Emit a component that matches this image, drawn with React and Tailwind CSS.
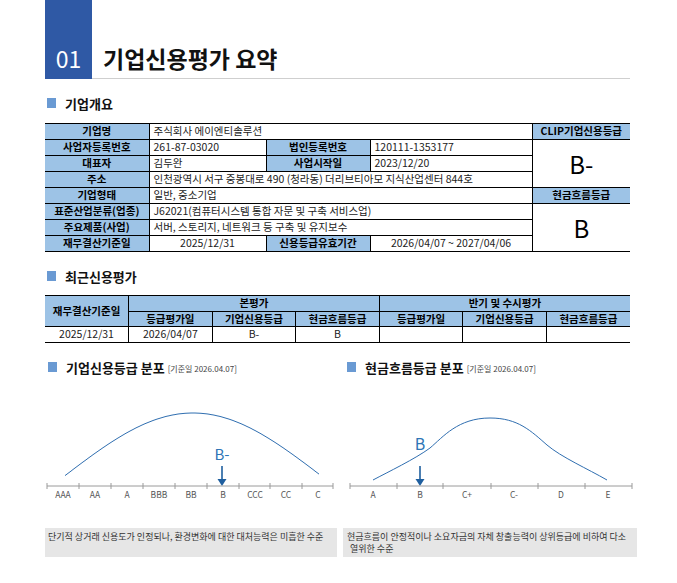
import React from "react";

const FONT = "font-['Noto_Sans_CJK_KR','Noto_Sans',sans-serif]";

const th = "bg-[#9dc3e6] border border-black font-bold text-black text-center px-1 whitespace-nowrap";
const td = "border border-black text-[#222] px-[4px] whitespace-nowrap";

// gaussian curve for the credit grade chart
const bell = () => {
  let d = "";
  for (let x = 20; x <= 274; x += 2) {
    const y = 197 - 163 * Math.exp(-((x - 148) ** 2) / (2 * 130 * 130));
    d += (x === 20 ? "M" : "L") + x + " " + y.toFixed(1) + " ";
  }
  return d;
};

const SectionTitle = ({ children, sub }) => (
  <div className="flex items-center h-[16px]">
    <span className="w-[9px] h-[10px] bg-[#6a9ad3]" />
    <span className="ml-[9px] text-[13px] font-bold text-[#111] leading-none">{children}</span>
    {sub && <span className="ml-[3px] mt-[3px] text-[8px] text-[#444] leading-none">{sub}</span>}
  </div>
);

const Axis = ({ ticks, labels, x1, x2 }) => (
  <g>
    <line x1={x1} y1="107" x2={x2} y2="107" stroke="#9a9a9a" strokeWidth="1" />
    {ticks.map((t) => (
      <line key={t} x1={t} y1="104" x2={t} y2="110" stroke="#9a9a9a" strokeWidth="1" />
    ))}
    {labels.map(([l, x]) => (
      <text key={l} x={x} y="119" textAnchor="middle" fontSize="8.5" fill="#555">
        {l}
      </text>
    ))}
  </g>
);

const Arrow = ({ x }) => (
  <g>
    <line x1={x} y1="87" x2={x} y2="102" stroke="#1f5f9f" strokeWidth="1.6" />
    <polygon points={`${x - 4.5},100 ${x + 4.5},100 ${x},107`} fill="#1f5f9f" />
  </g>
);

export default function App() {
  const leftTicks = [2, 34, 66, 98, 130, 162, 194, 225, 257, 288];
  const leftLabels = [
    ["AAA", 18], ["AA", 50], ["A", 82], ["BBB", 114], ["BB", 146],
    ["B", 178], ["CCC", 210], ["CC", 241], ["C", 273],
  ];
  const rightTicks = [7, 54, 100, 148, 195, 242, 289];
  const rightLabels = [
    ["A", 30], ["B", 77], ["C+", 124], ["C-", 171], ["D", 218], ["E", 265],
  ];

  return (
    <div className={`w-[677px] h-[583px] bg-white overflow-hidden ${FONT}`}>
      {/* header */}
      <div className="flex ml-[45px] w-[585px] h-[79px]">
        <div className="w-[47px] h-full bg-[#2f59a5] flex items-end justify-center pb-[9px] text-white text-[23px] leading-none">
          01
        </div>
        <div className="flex-1 h-full border-b border-[#cfcfcf] flex items-end pl-[11px] pb-[8px]">
          <span className="text-[23px] font-bold text-[#111] leading-none">기업신용평가 요약</span>
        </div>
      </div>

      {/* 기업개요 */}
      <div className="ml-[47px] mt-[16px]">
        <SectionTitle>기업개요</SectionTitle>
      </div>
      <table className="ml-[45px] mt-[12px] w-[585px] table-fixed border-collapse text-[10.5px] leading-none">
        <colgroup>
          <col className="w-[104px]" />
          <col className="w-[117px]" />
          <col className="w-[104px]" />
          <col className="w-[162px]" />
          <col className="w-[98px]" />
        </colgroup>
        <tbody>
          <tr className="h-[16px]">
            <th className={`${th} border-l-0`}>기업명</th>
            <td className={td} colSpan={3}>주식회사 에이엔티솔루션</td>
            <th className={`${th} border-r-0`}>CLIP기업신용등급</th>
          </tr>
          <tr className="h-[16px]">
            <th className={`${th} border-l-0`}>사업자등록번호</th>
            <td className={td}>261-87-03020</td>
            <th className={th}>법인등록번호</th>
            <td className={td}>120111-1353177</td>
            <td rowSpan={3} className="border border-black border-r-0 text-center text-[24px] text-black">B-</td>
          </tr>
          <tr className="h-[16px]">
            <th className={`${th} border-l-0`}>대표자</th>
            <td className={td}>김두완</td>
            <th className={th}>사업시작일</th>
            <td className={td}>2023/12/20</td>
          </tr>
          <tr className="h-[16px]">
            <th className={`${th} border-l-0`}>주소</th>
            <td className={td} colSpan={3}>인천광역시 서구 중봉대로 490 (청라동) 더리브티아모 지식산업센터 844호</td>
          </tr>
          <tr className="h-[16px]">
            <th className={`${th} border-l-0`}>기업형태</th>
            <td className={td} colSpan={3}>일반, 중소기업</td>
            <th className={`${th} border-r-0`}>현금흐름등급</th>
          </tr>
          <tr className="h-[16px]">
            <th className={`${th} border-l-0`}>표준산업분류(업종)</th>
            <td className={td} colSpan={3}>J62021(컴퓨터시스템 통합 자문 및 구축 서비스업)</td>
            <td rowSpan={3} className="border border-black border-r-0 text-center text-[24px] text-black">B</td>
          </tr>
          <tr className="h-[16px]">
            <th className={`${th} border-l-0`}>주요제품(사업)</th>
            <td className={td} colSpan={3}>서버, 스토리지, 네트워크 등 구축 및 유지보수</td>
          </tr>
          <tr className="h-[16px]">
            <th className={`${th} border-l-0`}>재무결산기준일</th>
            <td className={`${td} text-center`}>2025/12/31</td>
            <th className={th}>신용등급유효기간</th>
            <td className={`${td} text-center`}>2026/04/07 ~ 2027/04/06</td>
          </tr>
        </tbody>
      </table>

      {/* 최근신용평가 */}
      <div className="ml-[47px] mt-[16px]">
        <SectionTitle>최근신용평가</SectionTitle>
      </div>
      <table className="ml-[45px] mt-[11px] w-[585px] table-fixed border-collapse text-[10.5px] leading-none text-center">
        <tbody>
          <tr className="h-[16px]">
            <th rowSpan={2} className={`${th} border-l-0`}>재무결산기준일</th>
            <th colSpan={3} className={th}>본평가</th>
            <th colSpan={3} className={`${th} border-r-0`}>반기 및 수시평가</th>
          </tr>
          <tr className="h-[15px]">
            <th className={th}>등급평가일</th>
            <th className={th}>기업신용등급</th>
            <th className={th}>현금흐름등급</th>
            <th className={th}>등급평가일</th>
            <th className={th}>기업신용등급</th>
            <th className={`${th} border-r-0`}>현금흐름등급</th>
          </tr>
          <tr className="h-[16px]">
            <td className={`${td} border-l-0 text-center`}>2025/12/31</td>
            <td className={`${td} text-center`}>2026/04/07</td>
            <td className={`${td} text-center`}>B-</td>
            <td className={`${td} text-center`}>B</td>
            <td className={td}></td>
            <td className={td}></td>
            <td className={`${td} border-r-0`}></td>
          </tr>
        </tbody>
      </table>

      {/* 분포 charts */}
      <div className="flex ml-[45px] mt-[16px]">
        <div className="w-[292px]">
          <div className="pl-[3px]">
            <SectionTitle sub="[기준일 2026.04.07]">기업신용등급 분포</SectionTitle>
          </div>
          <svg width="292" height="125" className="mt-[4px]">
            <path d={bell()} fill="none" stroke="#2f6eb0" strokeWidth="1" />
            <text x="177" y="81" textAnchor="middle" fontSize="15" fill="#2e75b6">B-</text>
            <Arrow x={177} />
            <Axis ticks={leftTicks} labels={leftLabels} x1={2} x2={288} />
          </svg>
        </div>
        <div className="w-[294px] ml-[6px]">
          <div className="pl-[4px]">
            <SectionTitle sub="[기준일 2026.04.07]">현금흐름등급 분포</SectionTitle>
          </div>
          <svg width="294" height="125" className="mt-[4px]">
            <path
              d="M30 101 C45 93 72 80 87 69 C100 58 115 39 147 39 C175 39 188 52 204 66 C218 78 245 90 264 101"
              fill="none"
              stroke="#2f6eb0"
              strokeWidth="1"
            />
            <text x="77" y="71" textAnchor="middle" fontSize="16" fill="#2e75b6">B</text>
            <Arrow x={77} />
            <Axis ticks={rightTicks} labels={rightLabels} x1={7} x2={289} />
          </svg>
        </div>
      </div>

      {/* 설명 */}
      <div className="flex ml-[45px] mt-[24px] text-[9px] text-[#333] leading-[12px]">
        <div className="w-[292px] h-[29px] bg-[#e6e6e6] pl-[3px] pt-[3px] whitespace-nowrap">
          단기적 상거래 신용도가 인정되나, 환경변화에 대한 대처능력은 미흡한 수준
        </div>
        <div className="w-[294px] h-[29px] ml-[6px] bg-[#e6e6e6] pl-[4px] pt-[3px] whitespace-nowrap">
          현금흐름이 안정적이나 소요자금의 자체 창출능력이 상위등급에 비하여 다소
          <br />
          <span className="pl-[3px]">열위한 수준</span>
        </div>
      </div>
    </div>
  );
}
